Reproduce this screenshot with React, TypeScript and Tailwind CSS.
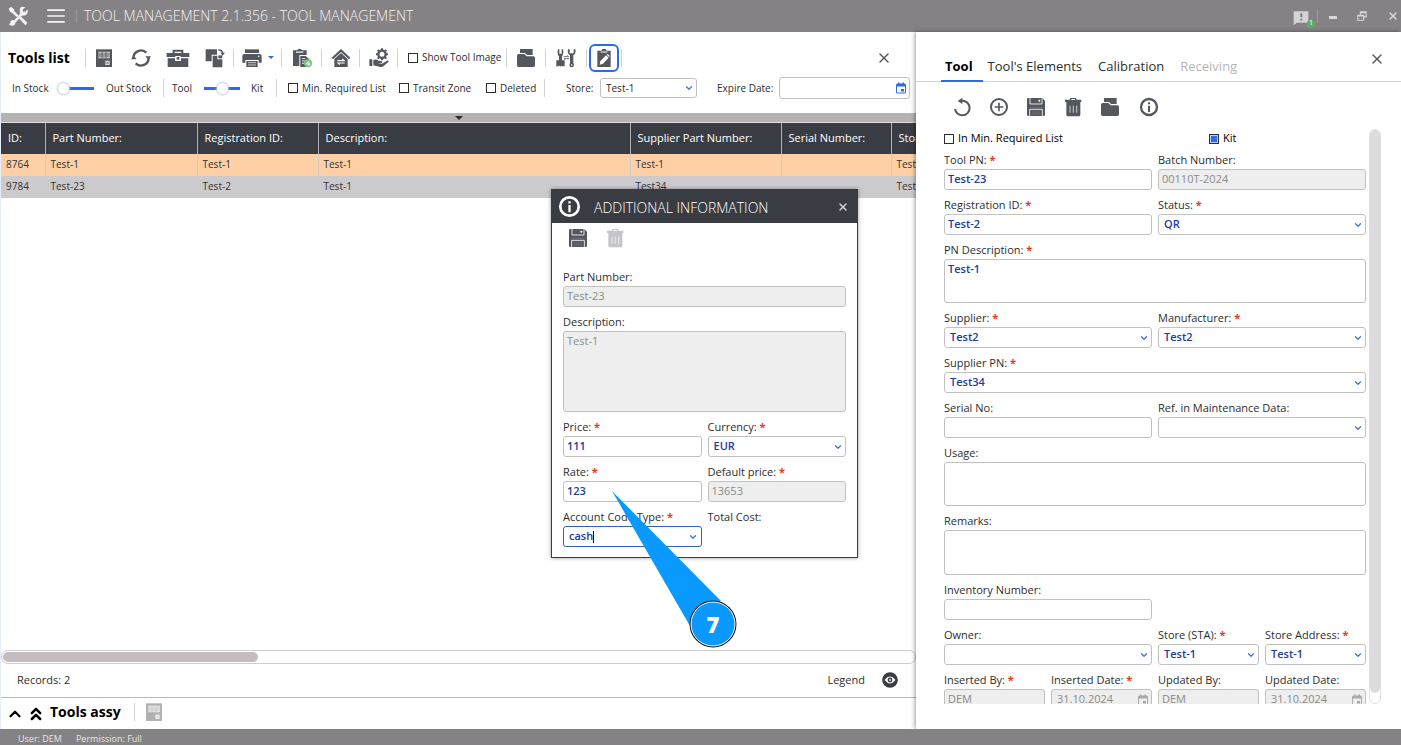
import { useId, useState, type ReactNode } from "react"
import { Menu, X, ChevronDown, ChevronUp, ChevronsUp } from "lucide-react"
import { clsx } from "clsx"

// ─── Icons ────────────────────────────────────────────────────────────────────

function Glyph({ children, className = "size-5" }: { children: ReactNode; className?: string }) {
  return (
    <svg viewBox="0 0 60 60" fill="currentColor" className={clsx("shrink-0", className)} aria-hidden="true">
      {children}
    </svg>
  )
}

function SheetIcon({ className }: { className?: string }) {
  return (
    <Glyph className={className}>
      <path d="M6 4h48v53H6z" />
      <path d="M13 11h35v20H13z" fill="#fff" opacity=".65" />
      <path d="M13 18h35M13 24h35M24 11v20M36 11v20" stroke="#55575f" strokeWidth="2.5" />
      <path d="M34 38h13v13H34z" fill="#fff" opacity=".8" />
      <path d="m37 41 7 7m0-7-7 7" stroke="#55575f" strokeWidth="2" />
    </Glyph>
  )
}

function RefreshIcon() {
  return (
    <Glyph>
      <path d="M7 30a23 23 0 0 1 39-16M53 30a23 23 0 0 1-39 16" fill="none" stroke="currentColor" strokeWidth="7" />
      <path d="M43 25h17l-8 11zM0 34h17L8 23z" />
    </Glyph>
  )
}

function UndoIcon() {
  return (
    <Glyph>
      <path d="M9 36a22 22 0 1 0 22-25h-4" fill="none" stroke="currentColor" strokeWidth="6" />
      <path d="M31 2v19L17 12z" />
    </Glyph>
  )
}

function AddIcon() {
  return (
    <Glyph>
      <circle cx="30" cy="30" r="24" fill="none" stroke="currentColor" strokeWidth="6" />
      <path d="M30 17v26M17 30h26" stroke="currentColor" strokeWidth="5" />
    </Glyph>
  )
}

function InfoIcon({ className }: { className?: string }) {
  return (
    <Glyph className={className}>
      <circle cx="30" cy="30" r="24" fill="none" stroke="currentColor" strokeWidth="7" />
      <path d="M27 26h6v19h-6zM27 16h6v6h-6z" />
    </Glyph>
  )
}

function ToolboxIcon() {
  return (
    <Glyph className="h-5 w-6">
      <path d="M14 15V5h32v10h-6v-4H20v4z" />
      <path d="M-4 15h68v12H38v-3H22v3H-4z" />
      <path d="M-1 31h22v8h18v-8h22v26H-1z" />
      <path d="M26 27h8v8h-8z" />
    </Glyph>
  )
}

function CopyIcon() {
  return (
    <Glyph>
      <path d="M2 4h34v16H20v20H2z" />
      <path d="M23 23h14v11h15v24H23z" />
      <path d="M40 22h12v9H40z" />
      <path d="M40 6c9 0 13 4 13 11" fill="none" stroke="currentColor" strokeWidth="4" />
      <path d="M46 14h14l-7 9z" />
    </Glyph>
  )
}

function PrinterIcon() {
  return (
    <Glyph>
      <path d="M9 4h42v11H9z" />
      <path d="M7 18h46q6 0 6 6v20h-9V36H10v8H1V24q0-6 6-6z" />
      <path d="M13 39h34v18H13z" />
      <path d="M18 44h24M18 51h24" stroke="#fff" strokeWidth="2" />
      <circle cx="50" cy="25" r="2.5" fill="#fff" />
    </Glyph>
  )
}

function PasteIcon() {
  return (
    <Glyph>
      <path d="M3 7h13q1-5 7-5t7 5h14v14H22v33H3z" />
      <path d="M12 10h22v5H12z" fill="#fff" opacity=".7" />
      <path d="M25 24h16l11 10v23H25z" />
      <path d="M30 32h10M30 39h12M30 46h8" stroke="#fff" strokeWidth="2.5" />
      <circle cx="48" cy="46" r="12" fill="#7cc486" />
      <path d="M50 39 43 48h12M51 42v12" fill="none" stroke="#fff" strokeWidth="2.5" />
    </Glyph>
  )
}

function HomeIcon() {
  return (
    <Glyph>
      <path d="M30 3 2 29l4 5L30 12l24 22 4-5z" />
      <path d="m30 15-20 18v24h40V33z" />
      <path d="M19 38h20l-5-5M41 45H21l5 5" fill="none" stroke="#fff" strokeWidth="3.5" />
    </Glyph>
  )
}

function ServiceIcon() {
  return (
    <Glyph>
      <circle cx="39" cy="19" r="11" fill="none" stroke="currentColor" strokeWidth="7" />
      <path d="M39 1v7M39 30v7M21 19h7M50 19h7M26 6l5 5M52 6l-5 5M26 32l5-5M52 32l-5-5" stroke="currentColor" strokeWidth="6" />
      <path d="M1 34h9v20H1zM13 36q9-4 16 2l9 1q4 4 0 6H26l13 2 15-9q5-1 5 3L43 55q-3 3-9 2L13 52z" />
    </Glyph>
  )
}

function FolderIcon() {
  return (
    <Glyph>
      <path d="M12 3h38v18H33l-6-6H12z" />
      <path d="M3 23q0-5 5-5h17l7 7h20q5 0 5 5v22q0 5-5 5H8q-5 0-5-5z" />
    </Glyph>
  )
}

function WrenchSwapIcon() {
  return (
    <Glyph>
      <path d="M6 4h4v13h7V4h4q3 10-1 17l-2 5v26q-4 7-9 0V26l-3-6q-3-8 0-16z" />
      <path d="M1 37h8v18H1zM18 37h8v18h-8z" />
      <path d="M36 4q-3 12 6 18v29q4 10 10 0V22q9-6 6-18h-5v12H41V4z" />
      <circle cx="47" cy="51" r="7" />
      <circle cx="47" cy="51" r="2.5" fill="#fff" />
      <path d="M23 26h15l-4-4M39 32H24l4 4" fill="none" stroke="currentColor" strokeWidth="2.5" />
    </Glyph>
  )
}

function EditNoteIcon() {
  return (
    <Glyph>
      <path d="M10 8h12q1-6 8-6t8 6h12v49H10z" />
      <path d="M20 9h20v6H20z" fill="#fff" opacity=".5" />
      <path d="m17 50 2-10 17-18 8 7-17 18z" fill="#fff" />
      <path d="m38 20 3-2 6 6-2 3z" fill="#fff" />
    </Glyph>
  )
}

function SaveIcon() {
  return (
    <Glyph>
      <path d="M6 3h43l8 8v42q0 4-4 4H7q-4 0-4-4V6q0-3 3-3z" />
      <path d="M12 3v18h36V3M11 57V37h38v20" fill="none" stroke="#fff" strokeWidth="2.5" />
      <path d="M11 31h38M18 45h24M18 51h24" stroke="#fff" strokeWidth="1" opacity=".4" />
      <circle cx="40" cy="11" r="3" fill="#fff" />
    </Glyph>
  )
}

function TrashIcon() {
  return (
    <Glyph>
      <path d="M21 8V3h19v5h15v7H6V8zM25 6v3h11V6z" fillRule="evenodd" />
      <path d="M10 14h42v39q0 5-5 5H15q-5 0-5-5z" />
      <path d="M21 26v21M31 26v21M41 26v21" stroke="#fff" strokeWidth="3.5" opacity=".6" />
    </Glyph>
  )
}

function CalendarIcon({ className }: { className?: string }) {
  return (
    <svg viewBox="0 0 24 24" fill="currentColor" className={className} aria-hidden="true">
      <path d="M6 1h3v2h6V1h3v2h1q3 0 3 3v14q0 3-3 3H5q-3 0-3-3V6q0-3 3-3h1zM4 9v12h16V9z" fillRule="evenodd" />
      <path d="M12 14h6v5h-6z" />
    </svg>
  )
}

function LogoIcon() {
  return (
    <Glyph className="size-5">
      <path d="M2 8 9 2l8 6 2 8 12 12-5 5-13-12-7-3z" />
      <path d="m33 37 6-5 18 17q1 6-5 9z" />
      <path d="M38 4q8-4 14 0l-8 7 1 6 7 0 6-7q4 13-6 18-5 2-9 0L22 50q1 8-8 9-8 1-12-5l6-3-1-6q8-5 12-2l18-21q-4-11 1-18z" />
    </Glyph>
  )
}

// ─── Form controls ────────────────────────────────────────────────────────────

const box = "block w-full rounded-[3px] border border-[#c3c1bf] outline-none"
const enabledBox = "bg-white font-semibold text-[#213d99]"
const disabledBox = "bg-[#eeeeee] text-[#8b8b8b]"

function Caption({ id, text, required }: { id?: string; text: string; required?: boolean }) {
  return (
    <label htmlFor={id} className="block h-[18px] text-[11px] leading-[18px] whitespace-nowrap text-[#2d2d2d]">
      {text}
      {required && <span className="font-bold text-[#e8391d]"> *</span>}
    </label>
  )
}

interface FieldProps {
  label: string
  value?: string
  required?: boolean
  disabled?: boolean
  className?: string
}

function TextField({ label, value = "", required, disabled, className, date }: FieldProps & { date?: boolean }) {
  const id = useId()
  return (
    <div className={className}>
      <Caption id={id} text={label} required={required} />
      <div className="relative">
        <input
          id={id}
          defaultValue={value}
          disabled={disabled}
          className={clsx(box, "h-[21px] pb-0.5 text-[11px]", date ? "px-[5px]" : "px-[3px]", disabled ? disabledBox : enabledBox)}
        />
        {date && <CalendarIcon className="absolute top-[5px] right-[3px] size-3 text-[#aaaaaa]" />}
      </div>
    </div>
  )
}

function SelectField({ label, value = "", required, className }: FieldProps) {
  const id = useId()
  return (
    <div className={className}>
      <Caption id={id} text={label} required={required} />
      <div className="relative">
        <select id={id} defaultValue={value} className={clsx(box, enabledBox, "h-[21px] appearance-none px-[5px] text-[11px]")}>
          <option>{value}</option>
        </select>
        <ChevronDown className="pointer-events-none absolute top-1.5 right-[3px] size-2.5 text-[#3c74e0]" strokeWidth={3} />
      </div>
    </div>
  )
}

function AreaField({ label, value = "", required, disabled, className, size = "h-11" }: FieldProps & { size?: string }) {
  const id = useId()
  return (
    <div className={className}>
      <Caption id={id} text={label} required={required} />
      <textarea
        id={id}
        defaultValue={value}
        disabled={disabled}
        className={clsx(box, "resize-none px-[3px] py-px text-[11px] leading-4", size, disabled ? disabledBox : enabledBox)}
      />
    </div>
  )
}

function CheckBox({ label, checked, className }: { label: string; checked?: boolean; className?: string }) {
  return (
    <label className={clsx("flex items-center gap-1 whitespace-nowrap", className)}>
      <input
        type="checkbox"
        defaultChecked={checked}
        className="size-2.5 shrink-0 appearance-none border border-[#2d2d2d] bg-white checked:bg-[#2a6be8] checked:shadow-[inset_0_0_0_1px_#b8cdf5]"
      />
      {label}
    </label>
  )
}

const slider =
  "h-3.5 w-9 shrink-0 appearance-none bg-transparent [&::-webkit-slider-runnable-track]:h-[3px] [&::-webkit-slider-runnable-track]:bg-[#2f6be0] [&::-webkit-slider-thumb]:-mt-1 [&::-webkit-slider-thumb]:size-[11px] [&::-webkit-slider-thumb]:appearance-none [&::-webkit-slider-thumb]:rounded-full [&::-webkit-slider-thumb]:bg-white [&::-webkit-slider-thumb]:shadow-[0_0_2px_1px_#c9c4d0]"

function Divider({ className }: { className?: string }) {
  return <span className={clsx("h-[18px] w-px shrink-0 bg-[#d2d2d2]", className)} />
}

function ToolButton({ label, children, className }: { label: string; children: ReactNode; className?: string }) {
  return (
    <button type="button" aria-label={label} className={clsx("flex h-7 shrink-0 items-center justify-center", className)}>
      {children}
    </button>
  )
}

// ─── Tools list ───────────────────────────────────────────────────────────────

const columns = [
  { title: "ID:", width: "w-[44px]" },
  { title: "Part Number:", width: "w-[152px]" },
  { title: "Registration ID:", width: "w-[121px]" },
  { title: "Description:", width: "w-[312px]" },
  { title: "Supplier Part Number:", width: "w-[151px]" },
  { title: "Serial Number:", width: "w-[110px]" },
  { title: "Store:", width: "w-[110px]" },
]

const rows = [
  ["8764", "Test-1", "Test-1", "Test-1", "Test-1", "", "Test-1"],
  ["9784", "Test-23", "Test-2", "Test-1", "Test34", "", "Test-1"],
]

function Toolbar() {
  return (
    <div className="flex h-[81px] shrink-0 flex-col text-[10px] text-[#2d2d2d]">
      <div className="flex h-[51px] shrink-0 items-center pl-[7px] text-[#55575f]">
        <h1 className="w-[77px] text-sm font-bold whitespace-nowrap text-black">Tools list</h1>
        <Divider />
        <ToolButton label="Sheet" className="w-9"><SheetIcon /></ToolButton>
        <ToolButton label="Refresh" className="w-[38px]"><RefreshIcon /></ToolButton>
        <ToolButton label="Toolbox" className="w-9"><ToolboxIcon /></ToolButton>
        <ToolButton label="Copy" className="w-[37px]"><CopyIcon /></ToolButton>
        <Divider />
        <ToolButton label="Print" className="w-[47px] gap-1.5">
          <PrinterIcon />
          <span className="border-x-[3px] border-t-[3px] border-x-transparent border-t-[#2a6be8]" />
        </ToolButton>
        <Divider />
        <ToolButton label="Paste" className="w-[39px]"><PasteIcon /></ToolButton>
        <Divider />
        <ToolButton label="Home store" className="w-[37px]"><HomeIcon /></ToolButton>
        <Divider />
        <ToolButton label="Service" className="w-[37px]"><ServiceIcon /></ToolButton>
        <Divider />
        <CheckBox label="Show Tool Image" className="w-[108px] pl-2.5 text-[#2d2d2d]" />
        <Divider />
        <ToolButton label="Documents" className="w-[38px]"><FolderIcon /></ToolButton>
        <Divider />
        <ToolButton label="Swap tools" className="w-10"><WrenchSwapIcon /></ToolButton>
        <Divider />
        <ToolButton label="Additional information" className="mx-0.5 w-[30px] rounded-md border-2 border-[#2a6be8]">
          <EditNoteIcon />
        </ToolButton>
        <Divider />
        <button type="button" aria-label="Close list" className="mr-6 ml-auto text-[#55575f]">
          <X className="size-4" />
        </button>
      </div>
      <div className="flex h-2.5 items-center pl-[11px] whitespace-nowrap">
        <label htmlFor="stock" className="w-[46px] shrink-0">In Stock</label>
        <input id="stock" type="range" min={0} max={2} defaultValue={0} className={slider} />
        <span className="w-[69px] shrink-0 pl-3">Out Stock</span>
        <Divider />
        <label htmlFor="kind" className="w-10 shrink-0 pl-2">Tool</label>
        <input id="kind" type="range" min={0} max={2} defaultValue={1} className={slider} />
        <span className="w-9 shrink-0 pl-[11px]">Kit</span>
        <Divider />
        <CheckBox label="Min. Required List" className="w-[122px] shrink-0 pl-[11px]" />
        <CheckBox label="Transit Zone" className="w-[87px] shrink-0" />
        <CheckBox label="Deleted" className="w-[58px] shrink-0" />
        <Divider />
        <label htmlFor="store" className="w-[55px] shrink-0 pl-[21px]">Store:</label>
        <div className="relative h-5 w-[97px] shrink-0">
          <select id="store" className="block h-5 w-full appearance-none rounded-[3px] border border-[#c3c1bf] bg-white px-[5px]">
            <option>Test-1</option>
          </select>
          <ChevronDown className="pointer-events-none absolute top-[5px] right-[3px] size-2.5 text-[#3c74e0]" strokeWidth={3} />
        </div>
        <label htmlFor="expire" className="w-[82px] shrink-0 pl-5">Expire Date:</label>
        <div className="relative mr-1.5 min-w-0 flex-1">
          <input id="expire" className="block h-[22px] w-full rounded-[3px] border border-[#c3c1bf] bg-white px-1" />
          <CalendarIcon className="absolute top-[5px] right-[3px] size-3 text-[#2a6be8]" />
        </div>
      </div>
    </div>
  )
}

function ToolsTable() {
  return (
    <div className="overflow-hidden">
      <table className="w-[1000px] table-fixed border-collapse text-left">
        <thead>
          <tr className="h-[31px] bg-[#3a3c43] text-[11px] text-white">
            {columns.map((c) => (
              <th key={c.title} className={clsx("border-r border-[#b0b0b4] px-[7px] font-normal whitespace-nowrap", c.width)}>
                {c.title}
              </th>
            ))}
          </tr>
        </thead>
        <tbody className="text-[10px] text-[#333333]">
          {rows.map((row, i) => (
            <tr key={row[0]} className={clsx("h-[22px]", i === 0 ? "bg-[#ffcfa6]" : "bg-[#cdcacd]")}>
              {row.map((cell, j) => (
                <td key={j} className="border-r border-[#d0cbcb] px-[5px] pb-0.5 leading-4">{cell}</td>
              ))}
            </tr>
          ))}
        </tbody>
      </table>
    </div>
  )
}

function ToolsList() {
  return (
    <main className="flex min-w-0 flex-1 flex-col border-l border-[#e6ecf8]">
      <Toolbar />
      <div className="flex h-[9px] shrink-0 justify-center bg-[#b4b2b3]">
        <span className="mt-[3px] h-0 border-x-4 border-t-4 border-x-transparent border-t-[#2d2d2d]" />
      </div>
      <div className="h-px shrink-0 bg-[#dddddd]" />
      <ToolsTable />
      <div className="flex-1" />
      <div className="h-3.5 shrink-0 rounded-full border border-[#cfcccf] p-px">
        <div className="h-full w-[28%] rounded-full bg-[#c5bdbd]" />
      </div>
      <div className="flex h-[34px] shrink-0 items-center border-b border-[#b8b8b8] px-4 pb-px text-[11px] text-[#2d2d2d]">
        <span className="flex-1">Records: 2</span>
        <span>Legend</span>
        <button type="button" aria-label="Show legend" className="mr-px ml-4 text-[#3a3c43]">
          <Glyph className="size-[18px]">
            <circle cx="30" cy="30" r="26" />
            <path d="M12 30q18-23 36 0-18 23-36 0z" fill="#fff" />
            <circle cx="30" cy="30" r="8" />
            <circle cx="30" cy="30" r="3" fill="#fff" />
          </Glyph>
        </button>
      </div>
      <div className="flex h-[31px] shrink-0 items-center pb-1 pl-[5px]">
        <button type="button" aria-label="Expand" className="mt-1"><ChevronUp className="size-[18px]" strokeWidth={3} /></button>
        <button type="button" aria-label="Expand all" className="mt-1 ml-0.5"><ChevronsUp className="size-5" strokeWidth={3} /></button>
        <h2 className="ml-1 w-[84px] text-sm leading-5 font-bold whitespace-nowrap text-black">Tools assy</h2>
        <Divider />
        <ToolButton label="Assembly sheet" className="w-[37px] opacity-30"><SheetIcon className="size-5" /></ToolButton>
      </div>
    </main>
  )
}

// ─── Tool details ─────────────────────────────────────────────────────────────

function ToolDetails() {
  const [tab, setTab] = useState("Tool")
  return (
    <aside className="z-10 flex w-[485px] shrink-0 flex-col bg-white shadow-[-1px_0_4px_#00000066]">
      <div className="flex h-[50px] shrink-0 items-end border-b border-[#d4d4d4] pl-[25px]">
        {["Tool", "Tool's Elements", "Calibration", "Receiving"].map((name) => (
          <button
            key={name}
            type="button"
            onClick={() => setTab(name)}
            className={clsx(
              "-mb-px h-7 border-b-2 text-[13px] whitespace-nowrap",
              name === tab ? "mr-[5px] border-[#2a6be8] pr-2.5 pl-1 font-bold text-black" : "mr-4 border-transparent",
              name !== tab && (name === "Receiving" ? "text-[#b5b5b5]" : "text-[#2d2d2d]")
            )}
          >
            {name}
          </button>
        ))}
        <button type="button" aria-label="Close details" className="mr-4 mb-3.5 ml-auto text-[#55575f]">
          <X className="size-4" />
        </button>
      </div>
      <div className="flex h-[47px] shrink-0 items-center gap-[17px] pt-0.5 pl-9 text-[#55575f]">
        <button type="button" aria-label="Undo"><UndoIcon /></button>
        <button type="button" aria-label="Add"><AddIcon /></button>
        <button type="button" aria-label="Save"><SaveIcon /></button>
        <button type="button" aria-label="Delete"><TrashIcon /></button>
        <button type="button" aria-label="Open folder"><FolderIcon /></button>
        <button type="button" aria-label="Info" className="ml-0.5"><InfoIcon /></button>
      </div>
      <div className="mb-[25px] flex min-h-0 flex-1 gap-[3px] pr-5 pl-7">
        <div className="min-w-0 flex-1 overflow-hidden">
          <div className="grid grid-cols-4 gap-x-1.5 gap-y-1.5">
            <CheckBox label="In Min. Required List" className="col-span-2 -mb-1.5 h-[22px] pb-[3px] text-[11px]" />
            <CheckBox label="Kit" checked className="col-span-2 -mb-1.5 ml-[51px] h-[22px] pb-[3px] text-[11px]" />
            <TextField label="Tool PN:" value="Test-23" required className="col-span-2" />
            <TextField label="Batch Number:" value="00110T-2024" disabled className="col-span-2" />
            <TextField label="Registration ID:" value="Test-2" required className="col-span-2" />
            <SelectField label="Status:" value="QR" required className="col-span-2" />
            <AreaField label="PN Description:" value="Test-1" required className="col-span-4" />
            <SelectField label="Supplier:" value="Test2" required className="col-span-2" />
            <SelectField label="Manufacturer:" value="Test2" required className="col-span-2" />
            <SelectField label="Supplier PN:" value="Test34" required className="col-span-4" />
            <TextField label="Serial No:" className="col-span-2" />
            <SelectField label="Ref. in Maintenance Data:" className="col-span-2" />
            <AreaField label="Usage:" className="col-span-4" />
            <AreaField label="Remarks:" size="h-[45px]" className="col-span-4" />
            <TextField label="Inventory Number:" className="col-span-2" />
            <SelectField label="Owner:" className="col-span-2 col-start-1" />
            <SelectField label="Store (STA):" value="Test-1" required />
            <SelectField label="Store Address:" value="Test-1" required />
            <TextField label="Inserted By:" value="DEM" required disabled />
            <TextField label="Inserted Date:" value="31.10.2024" required disabled date />
            <TextField label="Updated By:" value="DEM" disabled />
            <TextField label="Updated Date:" value="31.10.2024" disabled date />
          </div>
        </div>
        <div className="w-3 rounded-full border border-[#e2e0e2] pb-2.5">
          <div className="h-full rounded-full bg-[#dddbde]" />
        </div>
      </div>
    </aside>
  )
}

// ─── Additional information window ────────────────────────────────────────────

function AdditionalInfo() {
  return (
    <section
      role="dialog"
      aria-labelledby="info-title"
      className="absolute top-[189px] left-[551px] z-20 w-[307px] border border-[#3a3c43] bg-white shadow-[0_0_4px_#00000066]"
    >
      <header className="flex h-[33px] items-center bg-[#3a3c43] px-1.5 text-white">
        <InfoIcon className="size-[23px]" />
        <h2 id="info-title" className="ml-[13px] flex-1 pt-0.5 text-sm leading-5 font-light">ADDITIONAL INFORMATION</h2>
        <button type="button" aria-label="Close window" className="mr-0.5 text-[#d4d4d8]"><X className="size-3" strokeWidth={3} /></button>
      </header>
      <div className="flex h-[45px] gap-[17px] pt-[5px] pl-4 text-[#55575f]">
        <button type="button" aria-label="Save information" className="h-5"><SaveIcon /></button>
        <button type="button" aria-label="Delete information" disabled className="h-5 text-[#c4c4cb]"><TrashIcon /></button>
      </div>
      <div className="grid grid-cols-2 gap-1.5 px-[11px] pb-2.5">
        <TextField label="Part Number:" value="Test-23" disabled className="col-span-2" />
        <AreaField label="Description:" value="Test-1" disabled size="h-[81px]" className="col-span-2" />
        <TextField label="Price:" value="111" required />
        <SelectField label="Currency:" value="EUR" required />
        <TextField label="Rate:" value="123" required />
        <TextField label="Default price:" value="13653" required disabled />
        <div>
          <Caption id="account" text="Account Code Type:" required />
          <div className="flex h-[21px] items-center rounded-[3px] border border-[#2f62b8] px-[5px] text-[11px] text-[#213d99]">
            <input id="account" defaultValue="cash" className="field-sizing-content font-semibold caret-transparent outline-none" />
            <span className="h-3 w-px bg-black" />
            <ChevronDown className="-mr-0.5 ml-auto size-2.5 text-[#3c74e0]" strokeWidth={3} />
          </div>
        </div>
        <Caption text="Total Cost:" />
      </div>
    </section>
  )
}

function Callout() {
  return (
    <div className="pointer-events-none absolute top-[490px] left-[611px] z-30 h-[158px] w-[126px]">
      <svg viewBox="0 0 126 158" className="size-full" aria-hidden="true">
        <path d="M1 1 110 111l-31 25z" fill="#0a99ff" />
        <circle cx="102" cy="134" r="23.5" fill="#111" />
        <circle cx="102" cy="134" r="22" fill="#0a99ff" stroke="#fff" strokeWidth="1" />
      </svg>
      <span className="absolute right-0 bottom-0 flex size-12 items-center justify-center text-[22px] font-extrabold text-white">7</span>
    </div>
  )
}

export default function App() {
  return (
    <div className="relative flex h-screen flex-col overflow-hidden bg-white font-['Open_Sans','Noto_Sans',sans-serif]">
      <header className="flex h-8 shrink-0 items-center bg-[#848284] pr-0.5 pb-px pl-2 text-[#f2f2f2]">
        <LogoIcon />
        <button type="button" aria-label="Menu" className="ml-4">
          <Menu className="h-5 w-6" preserveAspectRatio="none" />
        </button>
        <span className="mr-[7px] ml-2 h-3.5 w-px bg-[#9b999b]" />
        <span className="flex-1 text-sm leading-5 font-light whitespace-nowrap">TOOL MANAGEMENT 2.1.356 - TOOL MANAGEMENT</span>
        <button type="button" aria-label="Messages" className="relative mt-1 mr-2 text-[#d4d4d4]">
          <svg viewBox="0 0 24 24" className="size-4" aria-hidden="true">
            <path d="M1 2h22v17H6l-5 4z" fill="currentColor" />
            <path d="M11 5h3v6h-3zM11 13h3v3h-3z" fill="#848284" />
          </svg>
          <span className="absolute -right-1.5 -bottom-0.5 flex size-2 items-center justify-center rounded-full bg-[#5fae68] text-[7px] text-white">1</span>
        </button>
        <span className="mr-[11px] h-3.5 w-px bg-[#9b999b]" />
        <button type="button" aria-label="Minimize" className="flex h-4 w-3 items-center pt-1"><span className="h-[3px] w-2 bg-[#d8d8d8]" /></button>
        <button type="button" aria-label="Restore" className="mr-5 ml-4">
          <svg viewBox="0 0 12 12" className="size-2.5" fill="none" stroke="#d8d8d8" strokeWidth="1.3" aria-hidden="true">
            <path d="M1 5h7v6H1zM1 6h7M4 5V1h7v6H8M4 2h7" />
          </svg>
        </button>
        <button type="button" aria-label="Close" className="text-[#d8d8d8]"><X className="size-3" strokeWidth={3} /></button>
      </header>
      <div className="flex min-h-0 flex-1">
        <ToolsList />
        <ToolDetails />
      </div>
      <footer className="z-10 flex h-4 shrink-0 items-center gap-3.5 bg-[#848284] pt-1 pl-[18px] text-[9px] text-[#e8e8e8]">
        <span>User: DEM</span>
        <span>Permission: Full</span>
      </footer>
      <AdditionalInfo />
      <Callout />
    </div>
  )
}
